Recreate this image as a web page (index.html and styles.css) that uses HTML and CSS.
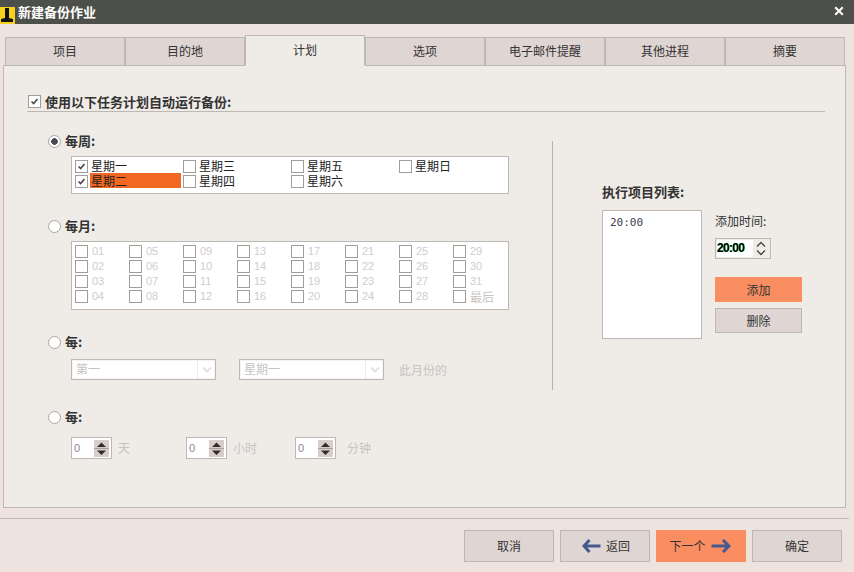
FILE: index.html
```html
<!DOCTYPE html>
<html lang="zh-CN">
<head>
<meta charset="utf-8">
<title>新建备份作业</title>
<link rel="stylesheet" href="styles.css">
</head>
<body>
<svg class="defs" width="0" height="0" aria-hidden="true">
  <defs>
    <symbol id="chk" viewBox="0 0 13 13"><path d="M3 6.5 L5.5 9 L10 3.5" fill="none" stroke="#4a4a52" stroke-width="2"/></symbol>
    <symbol id="spin" viewBox="0 0 15 17"><path d="M7.5 2.5 L12 7 H3 Z M3 10.5 H12 L7.5 15 Z" fill="#2e2e2e"/><path d="M0 8.5 H15" stroke="#a89f9b"/></symbol>
    <symbol id="chev" viewBox="0 0 12 8"><path d="M2 1.5 L6 5.5 L10 1.5" fill="none" stroke="#d9d6dc" stroke-width="1.5"/></symbol>
  </defs>
</svg>
<div class="window">
  <header class="titlebar">
    <svg class="logo" width="15" height="17" viewBox="0 0 15 17"><rect width="15" height="17" fill="#f6d21f"/><path d="M5 1 H9 V11 L13 12 V15 H1 V12 L5 11 Z" fill="#111"/></svg>
    <span class="title">新建备份作业</span>
    <svg class="close" width="10" height="10" viewBox="0 0 10 10"><path d="M1.2 1.2 L8.8 8.8 M8.8 1.2 L1.2 8.8" stroke="#fff" stroke-width="2"/></svg>
  </header>

  <nav class="tabs">
    <div class="tab">项目</div>
    <div class="tab">目的地</div>
    <div class="tab tab-active">计划</div>
    <div class="tab">选项</div>
    <div class="tab">电子邮件提醒</div>
    <div class="tab">其他进程</div>
    <div class="tab">摘要</div>
  </nav>

  <main class="panel">
    <div class="head">
      <span class="cb cb-head"><svg width="11" height="11"><use href="#chk"/></svg></span>
      <span class="bold">使用以下任务计划自动运行备份:</span>
    </div>

    <div class="columns">
      <section class="left">
        <div class="radio-row"><span class="radio radio-on"></span><span class="bold">每周:</span></div>
        <div class="box box-week">
          <label class="item"><span class="cb"><svg width="11" height="11"><use href="#chk"/></svg></span><span class="t">星期一</span></label>
          <label class="item"><span class="cb"><svg width="11" height="11"><use href="#chk"/></svg></span><span class="t t-sel">星期二</span></label>
          <label class="item"><span class="cb"></span><span class="t">星期三</span></label>
          <label class="item"><span class="cb"></span><span class="t">星期四</span></label>
          <label class="item"><span class="cb"></span><span class="t">星期五</span></label>
          <label class="item"><span class="cb"></span><span class="t">星期六</span></label>
          <label class="item"><span class="cb"></span><span class="t">星期日</span></label>
        </div>

        <div class="radio-row row-month"><span class="radio"></span><span class="bold">每月:</span></div>
        <div class="box box-month">
          <label class="item"><span class="cb"></span><span class="d">01</span></label>
          <label class="item"><span class="cb"></span><span class="d">02</span></label>
          <label class="item"><span class="cb"></span><span class="d">03</span></label>
          <label class="item"><span class="cb"></span><span class="d">04</span></label>
          <label class="item"><span class="cb"></span><span class="d">05</span></label>
          <label class="item"><span class="cb"></span><span class="d">06</span></label>
          <label class="item"><span class="cb"></span><span class="d">07</span></label>
          <label class="item"><span class="cb"></span><span class="d">08</span></label>
          <label class="item"><span class="cb"></span><span class="d">09</span></label>
          <label class="item"><span class="cb"></span><span class="d">10</span></label>
          <label class="item"><span class="cb"></span><span class="d">11</span></label>
          <label class="item"><span class="cb"></span><span class="d">12</span></label>
          <label class="item"><span class="cb"></span><span class="d">13</span></label>
          <label class="item"><span class="cb"></span><span class="d">14</span></label>
          <label class="item"><span class="cb"></span><span class="d">15</span></label>
          <label class="item"><span class="cb"></span><span class="d">16</span></label>
          <label class="item"><span class="cb"></span><span class="d">17</span></label>
          <label class="item"><span class="cb"></span><span class="d">18</span></label>
          <label class="item"><span class="cb"></span><span class="d">19</span></label>
          <label class="item"><span class="cb"></span><span class="d">20</span></label>
          <label class="item"><span class="cb"></span><span class="d">21</span></label>
          <label class="item"><span class="cb"></span><span class="d">22</span></label>
          <label class="item"><span class="cb"></span><span class="d">23</span></label>
          <label class="item"><span class="cb"></span><span class="d">24</span></label>
          <label class="item"><span class="cb"></span><span class="d">25</span></label>
          <label class="item"><span class="cb"></span><span class="d">26</span></label>
          <label class="item"><span class="cb"></span><span class="d">27</span></label>
          <label class="item"><span class="cb"></span><span class="d">28</span></label>
          <label class="item"><span class="cb"></span><span class="d">29</span></label>
          <label class="item"><span class="cb"></span><span class="d">30</span></label>
          <label class="item"><span class="cb"></span><span class="d">31</span></label>
          <label class="item"><span class="cb"></span><span class="d d-cjk">最后</span></label>
        </div>

        <div class="radio-row row-every"><span class="radio"></span><span class="bold">每:</span></div>
        <div class="selects">
          <div class="select"><span class="sel-text">第一</span><span class="sel-arrow"><svg width="12" height="8"><use href="#chev"/></svg></span></div>
          <div class="select"><span class="sel-text">星期一</span><span class="sel-arrow"><svg width="12" height="8"><use href="#chev"/></svg></span></div>
          <span class="muted month-of">此月份的</span>
        </div>

        <div class="radio-row row-interval"><span class="radio"></span><span class="bold">每:</span></div>
        <div class="spins">
          <div class="spin"><span class="spin-val">0</span><svg class="spin-btn" width="15" height="17"><use href="#spin"/></svg></div>
          <span class="muted unit u-day">天</span>
          <div class="spin"><span class="spin-val">0</span><svg class="spin-btn" width="15" height="17"><use href="#spin"/></svg></div>
          <span class="muted unit u-hour">小时</span>
          <div class="spin"><span class="spin-val">0</span><svg class="spin-btn" width="15" height="17"><use href="#spin"/></svg></div>
          <span class="muted unit">分钟</span>
        </div>
      </section>

      <div class="divider"></div>

      <section class="right">
        <div class="bold list-title">执行项目列表:</div>
        <div class="sched">
          <div class="listbox">20:00</div>
          <div class="adder">
            <div class="add-label">添加时间:</div>
            <div class="time">
              <span class="time-val">20:00</span>
              <svg width="12" height="17" viewBox="0 0 12 17"><path d="M2 6.5 L6 2.5 L10 6.5 M2 10.5 L6 14.5 L10 10.5" fill="none" stroke="#444" stroke-width="1.3"/></svg>
            </div>
            <button class="btn btn-small btn-hot btn-add">添加</button>
            <button class="btn btn-small btn-del">删除</button>
          </div>
        </div>
      </section>
    </div>
  </main>

  <footer class="footer">
    <button class="btn btn-foot">取消</button>
    <button class="btn btn-foot btn-back">
      <svg class="arrow" width="19" height="14" viewBox="0 0 19 14"><path d="M7.5 1 L2 7 L7.5 13 M2.5 7 H18.5" fill="none" stroke="#46598f" stroke-width="3"/></svg>
      <span>返回</span>
    </button>
    <button class="btn btn-foot btn-hot btn-next">
      <span>下一个</span>
      <svg class="arrow" width="20" height="14" viewBox="0 0 20 14"><path d="M12 1 L18 7 L12 13 M0.5 7 H17" fill="none" stroke="#46598f" stroke-width="3"/></svg>
    </button>
    <button class="btn btn-foot">确定</button>
  </footer>
</div>
</body>
</html>
```

FILE: styles.css
```css
* { box-sizing: border-box; }

html, body {
  margin: 0;
  padding: 0;
  width: 854px;
  height: 572px;
  overflow: hidden;
}

body {
  background: #eee3de;
  color: #333;
  font: 12px/14px "Noto Sans CJK SC", "Liberation Sans", sans-serif;
}

.defs { display: block; height: 0; }

.titlebar {
  display: flex;
  align-items: center;
  height: 24px;
  background: #4d4f4b;
  color: #fff;
}
.logo { margin-right: 3px; margin-top: 7px; }
.title { font-size: 13px; font-weight: 700; }
.close { margin-left: auto; margin-right: 10px; margin-top: -2px; }

.tabs {
  display: flex;
  align-items: flex-end;
  height: 31px;
  margin: 11px 0 -1px 5px;
}
.tab {
  position: relative;
  width: 120px;
  height: 29px;
  padding-top: 6px;
  text-align: center;
  background: #dfd6d4;
  border: 1px solid #bdb8b4;
}
.tab-active {
  z-index: 1;
  height: 31px;
  padding-top: 7px;
  background: #efece7;
  border-bottom-color: #efece7;
}

.panel {
  width: 843px;
  height: 443px;
  margin-left: 3px;
  background: #efece7;
  border: 1px solid #bdb8b4;
}

.bold { font-size: 13px; font-weight: 700; color: #333; }

.head {
  display: flex;
  align-items: center;
  gap: 4px;
  height: 17px;
  margin: 29px 20px 0 23px;
  padding: 0 0 3px 1px;
  border-bottom: 1px solid #bdb8b4;
}

.cb {
  flex: none;
  display: flex;
  width: 13px;
  height: 13px;
  background: #fff;
  border: 1px solid #a09d9d;
}

.columns {
  display: flex;
  align-items: flex-start;
  margin-top: 22px;
  margin-left: 44px;
}

.left { width: 504px; flex: none; }

.radio-row {
  display: flex;
  align-items: center;
  gap: 4px;
  height: 14px;
}
.radio {
  flex: none;
  width: 13px;
  height: 13px;
  border: 1px solid #a9a5a5;
  border-radius: 50%;
  background: #fff;
}
.radio-on {
  background: radial-gradient(circle, #4a4a52 0 3px, #fff 3.6px);
}

.box {
  display: grid;
  grid-auto-flow: column;
  background: #fff;
  border: 1px solid #bdb8b4;
  margin-left: 23px;
  padding: 2px 0 0 3px;
}
.box-week {
  grid-template-columns: repeat(4, 108px);
  grid-template-rows: repeat(2, 15px);
  width: 438px;
  height: 38px;
  margin-top: 8px;
}
.box-month {
  grid-template-columns: repeat(8, 54px);
  grid-template-rows: repeat(4, 15px);
  width: 438px;
  height: 69px;
  margin-top: 8px;
}

.item {
  display: flex;
  align-items: center;
  gap: 2px;
  height: 15px;
}
.t {
  flex: 1;
  align-self: flex-start;
  height: 15px;
  margin: -1px 2px 0 0;
  padding-left: 1px;
  line-height: 15px;
  color: #222;
}
.t-sel { background: #f26722; }
.d {
  padding-left: 2px;
  font: 11px/15px "Liberation Sans", sans-serif;
  color: #d2cbcf;
}
.d-cjk {
  font: 12px/15px "Noto Sans CJK SC", sans-serif;
  color: #c8c4c2;
}

.row-month { margin-top: 25px; }
.row-every { margin-top: 25px; }
.row-interval { margin-top: 30px; }

.selects {
  display: flex;
  align-items: center;
  margin: 10px 0 0 23px;
}
.select {
  display: flex;
  width: 145px;
  height: 21px;
  margin-right: 23px;
  background: #fff;
  border: 1px solid #bdb8b4;
  box-shadow: inset 0 0 0 1px #f5f3f0;
}
.sel-text {
  flex: 1;
  padding: 1px 0 0 4px;
  color: #c6c3c1;
  line-height: 15px;
  border-right: 1px solid #eeeae8;
}
.sel-arrow {
  flex: none;
  display: flex;
  align-items: center;
  justify-content: center;
  width: 17px;
}
.muted { color: #c6c3c1; }
.month-of { margin-left: -8px; }

.spins {
  display: flex;
  align-items: center;
  margin: 13px 0 0 23px;
}
.spin {
  flex: none;
  display: flex;
  align-items: center;
  justify-content: space-between;
  width: 41px;
  height: 22px;
  padding: 0 2px;
  background: #fff;
  border: 1px solid #bdb8b4;
}
.spin-val {
  font: 11px/18px "Liberation Sans", sans-serif;
  color: #8b7fa0;
}
.spin-btn { background: #d8cdc9; }
.unit { margin-left: 6px; }
.u-day { width: 68px; }
.u-hour { width: 62px; }
.unit:last-child { margin-left: 11px; }

.divider {
  flex: none;
  width: 1px;
  height: 249px;
  margin-top: 7px;
  background: #b5b1ad;
}

.right {
  flex: none;
  margin-left: 49px;
  padding-top: 51px;
}
.list-title { line-height: 14px; }
.sched {
  display: flex;
  margin-top: 11px;
}
.listbox {
  width: 100px;
  height: 129px;
  padding: 5px 0 0 7px;
  background: #fff;
  border: 1px solid #bdb8b4;
  font: 11px/14px "DejaVu Sans Mono", monospace;
  color: #3b4150;
}
.adder {
  display: flex;
  flex-direction: column;
  align-items: flex-start;
  margin-left: 13px;
}
.add-label { margin-top: 4px; }
.time {
  display: flex;
  align-items: center;
  justify-content: space-between;
  width: 56px;
  height: 21px;
  margin-top: 10px;
  border: 1px solid #bdb8b4;
  padding: 0 3px 0 1px;
}
.time-val {
  width: 36px;
  height: 17px;
  background: #fff;
  color: #000;
  font: 700 12px/17px "Liberation Sans", sans-serif;
  letter-spacing: -0.7px;
  text-shadow: -0.5px 0 #2ee, 0.5px 0 #ee2;
}

.btn {
  display: flex;
  align-items: center;
  justify-content: center;
  padding: 0;
  margin: 0;
  font: inherit;
  color: #333;
  background: #dfd6d3;
  border: 1px solid #bdb8b4;
}
.btn-small { width: 87px; height: 25px; }
.btn-add { margin-top: 18px; }
.btn-del { margin-top: 6px; }
.btn-hot {
  background: #fa8e61;
  border-color: #fa8e61;
}

.footer {
  display: flex;
  justify-content: flex-end;
  gap: 6px;
  width: 849px;
  height: 44px;
  margin-top: 10px;
  padding: 11px 7px 0 0;
  border-top: 1px solid #bdb8b4;
}
.btn-foot {
  width: 90px;
  height: 32px;
  gap: 5px;
}
.btn-back { padding-left: 2px; }
.btn-next { padding-right: 2px; }
```
